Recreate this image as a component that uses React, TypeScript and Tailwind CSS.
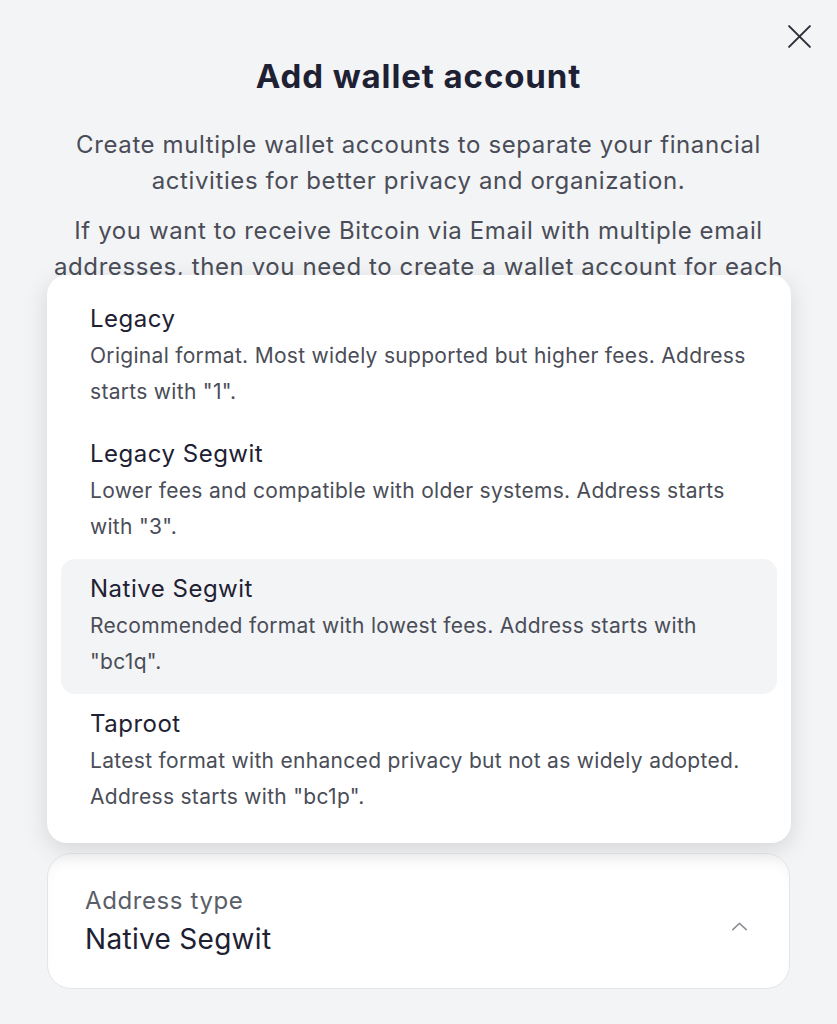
import React from "react";

const options = [
  {
    title: "Legacy",
    desc: 'Original format. Most widely supported but higher fees. Address starts with "1".',
  },
  {
    title: "Legacy Segwit",
    desc: 'Lower fees and compatible with older systems. Address starts with "3".',
  },
  {
    title: "Native Segwit",
    desc: 'Recommended format with lowest fees. Address starts with "bc1q".',
    selected: true,
  },
  {
    title: "Taproot",
    desc: 'Latest format with enhanced privacy but not as widely adopted. Address starts with "bc1p".',
  },
];

export default function App() {
  return (
    <div
      className="relative w-[837px] h-[1024px] overflow-hidden bg-[#f3f4f6]"
      style={{ fontFamily: "Inter, 'Noto Sans', sans-serif" }}
    >
      <button className="absolute right-[25px] top-[24px] w-[25px] h-[25px] text-[#2b2f3a]">
        <svg viewBox="0 0 24 24" width="25" height="25" fill="none" stroke="currentColor" strokeWidth="1.9" strokeLinecap="round">
          <path d="M2 2L22 22M22 2L2 22" />
        </svg>
      </button>

      <div className="flex flex-col px-[47px]">
        <div className="h-[853px] overflow-hidden pt-[56px] text-center">
          <h1 className="text-[33px] leading-[40px] font-bold text-[#1e2133] tracking-[0.9px]">
            Add wallet account
          </h1>
          <p className="mt-[31px] px-[4px] text-[24px] leading-[36px] tracking-[0.6px] text-[#4a4d57]">
            Create multiple wallet accounts to separate your financial activities for better privacy and organization.
          </p>
          <p className="mt-[14px] px-[4px] text-[24px] leading-[36px] tracking-[0.6px] text-[#4a4d57]">
            If you want to receive Bitcoin via Email with multiple email addresses, then you need to create a wallet account for each email address.
          </p>
        </div>

        <div className="relative">
          <div className="absolute left-0 right-[-1px] bottom-[calc(100%+10px)] rounded-[20px] bg-white p-[14px] shadow-[0_6px_24px_rgba(0,0,0,0.13)]">
            {options.map((o) => (
              <div
                key={o.title}
                className={`h-[135px] rounded-[14px] pl-[29px] pr-[12px] pt-[14px] ${o.selected ? "bg-[#f3f4f6]" : ""}`}
              >
                <div className="text-[24px] leading-[32px] tracking-[0.5px] text-[#1e2133]">{o.title}</div>
                <div className="mt-[3px] text-[21px] leading-[36px] tracking-[0.3px] text-[#4a4d57]">{o.desc}</div>
              </div>
            ))}
          </div>

          <div className="flex h-[136px] items-center justify-between rounded-[24px] border border-[#e3e5e9] bg-white pl-[37px] pr-[41px] shadow-[inset_0_10px_16px_-8px_rgba(0,0,0,0.06)]">
            <div className="flex flex-col">
              <span className="text-[24px] leading-[30px] tracking-[0.6px] text-[#5a5e68]">Address type</span>
              <span className="mt-[6px] text-[28px] leading-[34px] tracking-[0.3px] text-[#1e2133]">Native Segwit</span>
            </div>
            <svg viewBox="0 0 18 10" width="17" height="9" fill="none" stroke="#8a8d94" strokeWidth="1.6" strokeLinecap="round" strokeLinejoin="round" className="mt-[10px]">
              <path d="M1.5 8.5L9 1.5L16.5 8.5" />
            </svg>
          </div>
        </div>
      </div>
    </div>
  );
}
